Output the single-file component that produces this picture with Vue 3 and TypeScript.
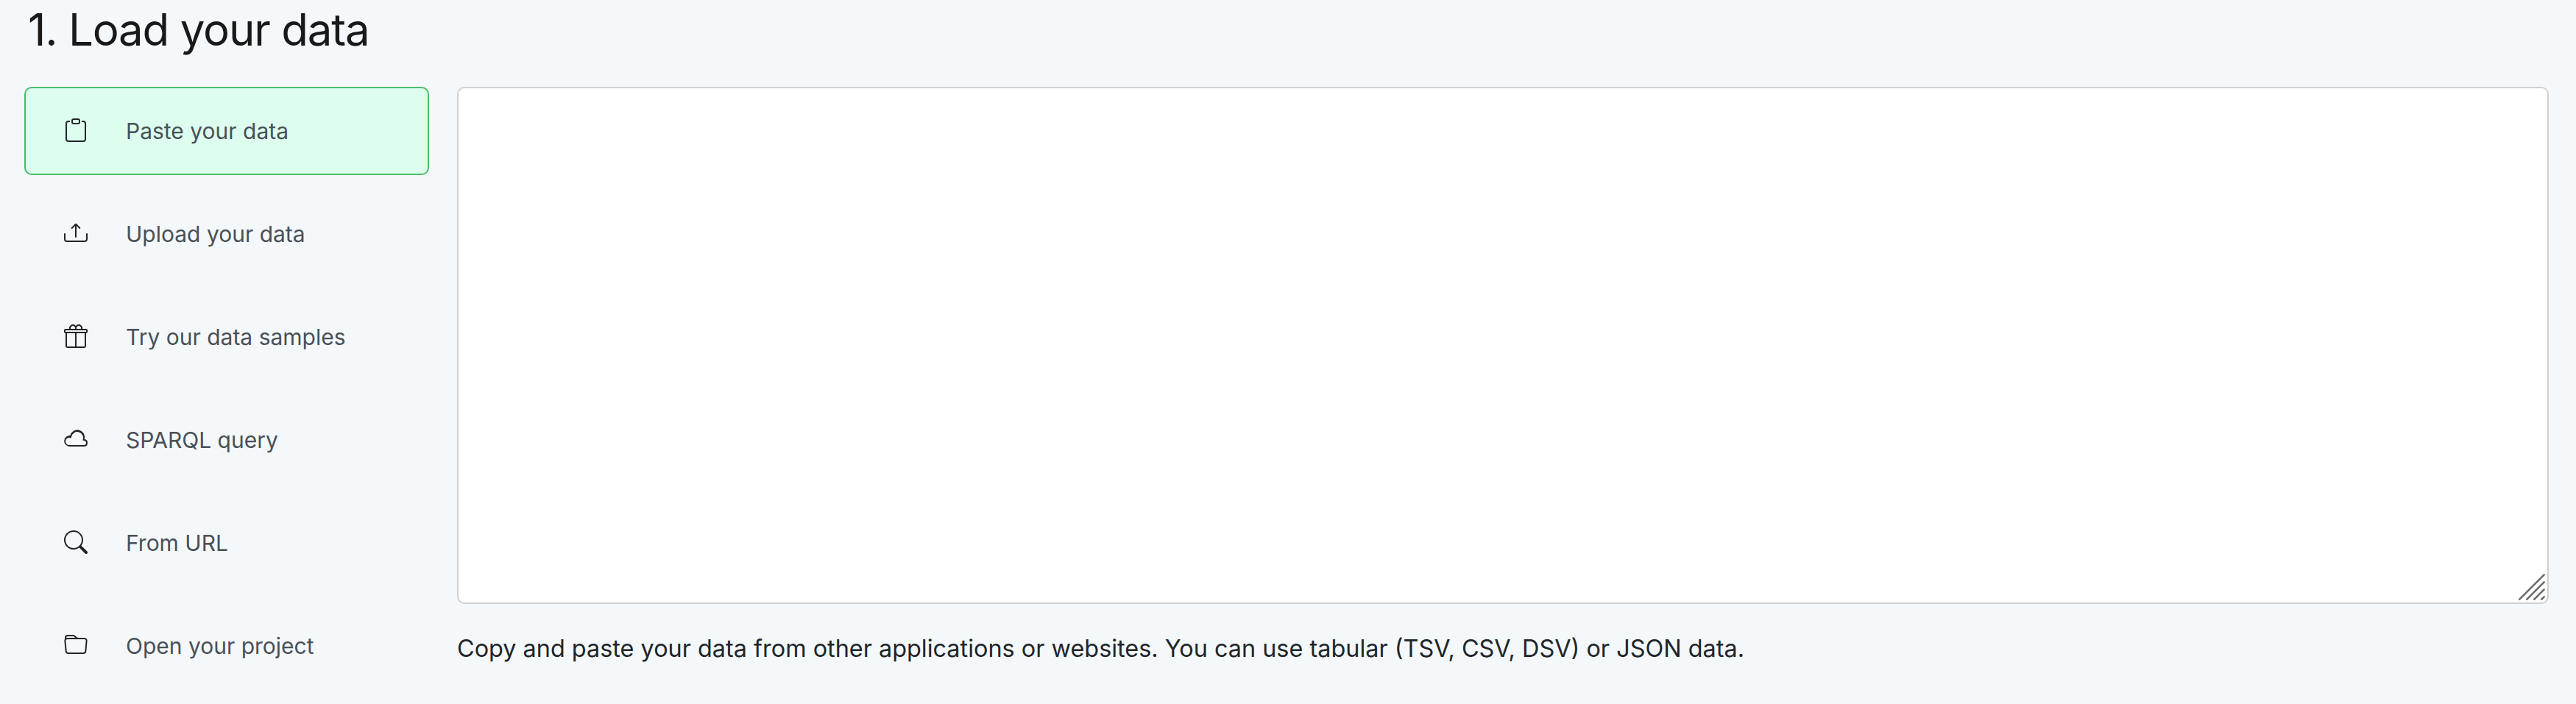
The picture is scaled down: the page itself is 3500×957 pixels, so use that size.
<script setup lang="ts">
import { ref } from 'vue'

interface Loader {
  label: string
  outline?: boolean
  paths: string[]
}

const loaders: Loader[] = [
  {
    label: 'Paste your data',
    paths: [
      'M4 1.5H3a2 2 0 0 0-2 2V14a2 2 0 0 0 2 2h10a2 2 0 0 0 2-2V3.5a2 2 0 0 0-2-2h-1v1h1a1 1 0 0 1 1 1V14a1 1 0 0 1-1 1H3a1 1 0 0 1-1-1V3.5a1 1 0 0 1 1-1h1v-1z',
      'M9.5 1a.5.5 0 0 1 .5.5v1a.5.5 0 0 1-.5.5h-3a.5.5 0 0 1-.5-.5v-1a.5.5 0 0 1 .5-.5h3zm-3-1A1.5 1.5 0 0 0 5 1.5v1A1.5 1.5 0 0 0 6.5 4h3A1.5 1.5 0 0 0 11 2.5v-1A1.5 1.5 0 0 0 9.5 0h-3z',
    ],
  },
  {
    label: 'Upload your data',
    paths: [
      'M.5 8a.5.5 0 0 1 .5.5V12a1 1 0 0 0 1 1h12a1 1 0 0 0 1-1V8.5a.5.5 0 0 1 1 0V12a2 2 0 0 1-2 2H2a2 2 0 0 1-2-2V8.5A.5.5 0 0 1 .5 8z',
      'M5 4.854a.5.5 0 0 0 .707 0L8 2.56l2.293 2.293A.5.5 0 1 0 11 4.146L8.354 1.5a.5.5 0 0 0-.708 0L5 4.146a.5.5 0 0 0 0 .708z',
      'M8 2a.5.5 0 0 1 .5.5v8a.5.5 0 0 1-1 0v-8A.5.5 0 0 1 8 2z',
    ],
  },
  {
    label: 'Try our data samples',
    outline: true,
    paths: [
      'M4.270 3.500A2 2 0 1 1 7.730 3.500M8.270 3.500A2 2 0 1 1 11.730 3.500',
      'M1 3.500h14a.5.5 0 0 1 .5.5v1a.5.5 0 0 1-.5.5H1a.5.5 0 0 1-.5-.5V4a.5.5 0 0 1 .5-.5z',
      'M1.500 5.500v9a1 1 0 0 0 1 1h11a1 1 0 0 0 1-1v-9M8 5.500v10',
    ],
  },
  {
    label: 'SPARQL query',
    paths: [
      'M4.887 7.200l-.964-.165A2.500 2.500 0 1 0 3.500 12h10a1.500 1.500 0 0 0 .237-2.982l-1.038-.164.216-1.028a4 4 0 1 0-7.843-1.587l-.185.960zm9.084.341a5 5 0 0 0-9.799-1.983A3.500 3.500 0 1 0 3.500 13h10a2.500 2.500 0 0 0 .394-4.968c.033-.160.060-.324.077-.490z',
    ],
  },
  {
    label: 'From URL',
    paths: [
      'M11.742 10.344a6.500 6.500 0 1 0-1.397 1.398h-.001c.030.040.062.078.098.115l3.850 3.850a1 1 0 0 0 1.415-1.414l-3.850-3.850a1.007 1.007 0 0 0-.115-.100zM12 6.500a5.500 5.500 0 1 1-11 0 5.500 5.500 0 0 1 11 0z',
    ],
  },
  {
    label: 'Open your project',
    paths: [
      'M.54 3.870L.5 3a2 2 0 0 1 2-2h3.672a2 2 0 0 1 1.414.586l.828.828A2 2 0 0 0 9.828 3h3.982a2 2 0 0 1 1.992 2.181l-.637 7A2 2 0 0 1 13.174 14H2.826a2 2 0 0 1-1.991-1.819l-.637-7a1.990 1.990 0 0 1 .342-1.310zM2.190 4a1 1 0 0 0-.996 1.090l.637 7a1 1 0 0 0 .995.910h10.348a1 1 0 0 0 .995-.910l.637-7A1 1 0 0 0 13.810 4H2.190zm4.690-1.707A1 1 0 0 0 6.172 2H2.500a1 1 0 0 0-1 .981l.006.139C1.720 3.042 1.950 3 2.190 3h5.396l-.707-.707z',
    ],
  },
]

const selected = ref(0)
const input = ref('')
</script>

<template>
  <main class="page">
    <h1 class="title">1. Load your data</h1>
    <div class="columns">
      <nav class="loaders">
        <button
          v-for="(loader, i) in loaders"
          :key="loader.label"
          type="button"
          class="loader"
          :class="{ active: i === selected }"
          @click="selected = i"
        >
          <svg class="icon" :class="{ outline: loader.outline }" viewBox="0 0 16 16" aria-hidden="true">
            <path v-for="d in loader.paths" :key="d" :d="d" fill-rule="evenodd" />
          </svg>
          <span class="label">{{ loader.label }}</span>
        </button>
      </nav>
      <section class="editor">
        <div class="field">
          <textarea v-model="input" class="textarea" aria-label="Data"></textarea>
          <svg class="grip" viewBox="0 0 38 38" aria-hidden="true">
            <path d="M3.300 36.700L36.600 3.300M13.300 36.700L36.600 13.300M23.300 36.700L36.600 23.300M33.300 36.700L36.600 33.300" />
          </svg>
        </div>
        <p class="help">Copy and paste your data from other applications or websites. You can use tabular (TSV, CSV, DSV) or JSON data.</p>
      </section>
    </div>
  </main>
</template>

<style>
body {
  background: #f4f8fb;
}
</style>

<style scoped>
.page {
  box-sizing: border-box;
  height: 957px;
  padding: 4px 37px 0 33px;
  overflow: hidden;
  background: #f4f8fb;
  font-family: Inter, "Liberation Sans", sans-serif;
  color: #212529;
}
.title {
  height: 72px;
  margin: 0 0 42px 5px;
  font-size: 60px;
  line-height: 72px;
  font-weight: 400;
  letter-spacing: -1.2px;
  color: #191919;
}
.columns {
  display: flex;
  gap: 38px;
}
.loaders {
  display: flex;
  flex: none;
  flex-direction: column;
  gap: 20px;
  width: 550px;
}
.loader {
  box-sizing: border-box;
  display: flex;
  align-items: center;
  gap: 52px;
  height: 120px;
  padding: 0 52px;
  border: 2px solid transparent;
  border-radius: 10px;
  background: transparent;
  font: 400 30px/40px Inter, "Liberation Sans", sans-serif;
  color: #495057;
  text-align: left;
}
.loader.active {
  border-color: #48be6a;
  background: #ddfeef;
}
.icon {
  flex: none;
  width: 32px;
  height: 32px;
  margin-top: -2px;
  fill: #212529;
}
.icon.outline {
  fill: none;
  stroke: #212529;
  stroke-width: 1;
}
.editor {
  flex: 1;
  min-width: 0;
}
.field {
  position: relative;
  height: 703px;
}
.textarea {
  box-sizing: border-box;
  display: block;
  width: 100%;
  height: 100%;
  padding: 12px 24px;
  border: 2px solid #d0d0d0;
  border-radius: 10px;
  outline: none;
  background: #fff;
  resize: none;
}
.grip {
  position: absolute;
  right: 5px;
  bottom: 5px;
  width: 38px;
  height: 38px;
  fill: none;
  stroke: #6c6c6c;
  stroke-width: 2.6;
  stroke-linecap: round;
}
.help {
  margin: 36px 0 0;
  font-size: 32.4px;
  line-height: 50px;
  font-weight: 400;
  white-space: nowrap;
}
</style>
